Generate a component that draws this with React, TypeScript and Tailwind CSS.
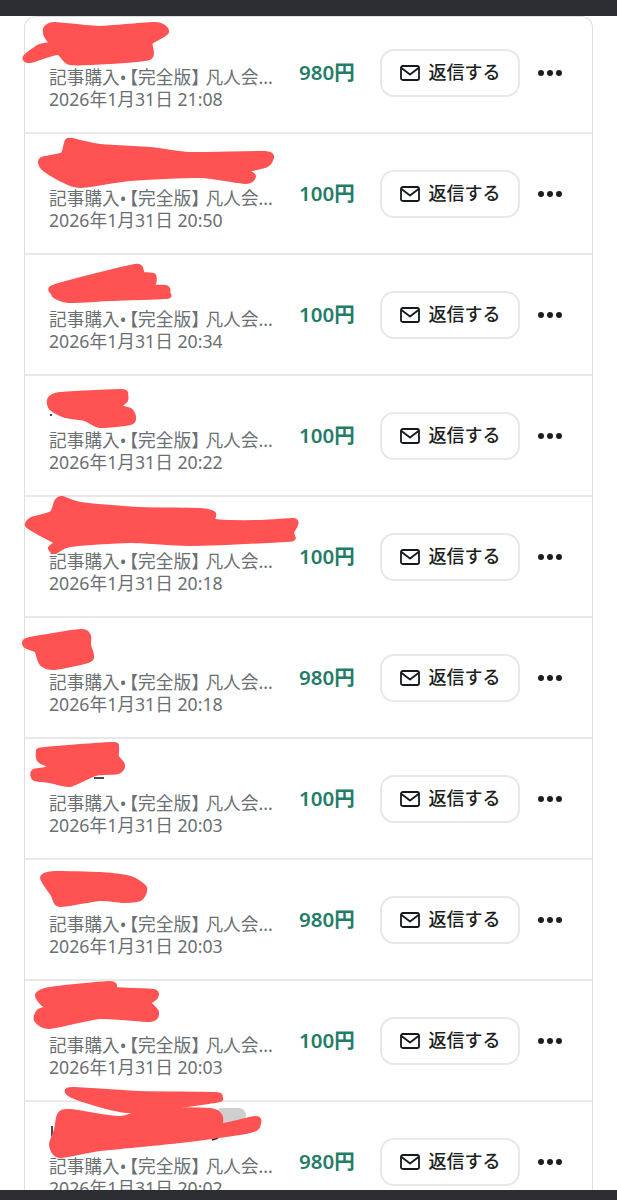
const rows = [
  { price: "980円", time: "21:08" },
  { price: "100円", time: "20:50" },
  { price: "100円", time: "20:34" },
  { price: "100円", time: "20:22" },
  { price: "100円", time: "20:18" },
  { price: "980円", time: "20:18" },
  { price: "100円", time: "20:03" },
  { price: "980円", time: "20:03" },
  { price: "100円", time: "20:03" },
  { price: "980円", time: "20:02" },
];

const scribbles = [
  "46,29 55,25 100,29 155,25 166,32 150,42 149,57 110,61 70,62 58,52 30,60 26,57 40,47 52,44 47,36",
  "42,160 63,155 68,141 80,143 100,147 150,150 190,155 265,154 270,160 265,165 245,170 253,176 245,181 200,175 130,178 80,185 60,178 44,168",
  "53,288 85,279 135,267 141,271 142,275 153,276 153,283 145,287 166,288 167,294 165,296 110,298 70,300 56,296 53,292",
  "50,400 60,395 120,392 125,395 125,400 118,407 130,411 133,417 130,422 100,425 85,418 65,415 52,408",
  "28,525 32,520 52,514 57,502 62,499 80,505 140,510 200,511 213,514 215,522 262,523 293,521 295,525 291,532 292,537 285,539 190,543 130,540 70,544 55,551 51,548 57,542 37,531",
  "25,643 30,640 80,632 88,636 88,645 91,655 88,660 55,667 42,663 37,650 27,646",
  "39,752 45,750 110,745 116,747 116,757 122,765 118,771 95,773 70,784 50,780 35,778 34,772 45,770 52,766 40,760",
  "43,878 55,874 100,875 130,879 144,888 140,898 125,900 100,898 60,904 54,895",
  "38,995 50,990 110,984 116,990 153,992 155,997 148,1003 156,1012 150,1019 100,1016 50,1026 37,1020 39,1012 49,1008 42,1002",
  "68,1092 75,1090 140,1094 215,1095 217,1098 215,1100 130,1110 80,1098",
  "60,1115 70,1112 120,1119 150,1111 210,1111 220,1117 222,1126 255,1119 258,1123 250,1130 180,1140 100,1148 60,1155 52,1145 57,1130",
];

function smooth(points: string) {
  const p = points.split(" ").map((s) => s.split(",").map(Number));
  const n = p.length;
  let d = `M${p[0][0]} ${p[0][1]}`;
  for (let i = 0; i < n; i++) {
    const a = p[(i - 1 + n) % n];
    const b = p[i];
    const c = p[(i + 1) % n];
    const e = p[(i + 2) % n];
    const t = 0.12;
    d += `C${b[0] + (c[0] - a[0]) * t} ${b[1] + (c[1] - a[1]) * t} ${c[0] - (e[0] - b[0]) * t} ${c[1] - (e[1] - b[1]) * t} ${c[0]} ${c[1]}`;
  }
  return d + "Z";
}

export default function App() {
  return (
    <div className="relative flex h-[1200px] flex-col overflow-hidden bg-white font-['Noto_Sans','Noto_Sans_CJK_JP',sans-serif]">
      <div className="h-4 shrink-0 bg-[#2d2e33]" />
      <div className="min-h-0 flex-1 overflow-hidden px-6">
        <div className="overflow-hidden rounded-t-xl border-x border-t border-[#dfdfdf]">
          {rows.map((r, i) => (
            <div
              key={i}
              className={`flex h-[121px] items-center border-b-2 border-[#e8e8e8] pl-[24px] ${i === 0 ? "-mt-[4px]" : ""}`}
            >
              <div className="w-[228px] shrink-0 pt-[30px] text-[17.7px] leading-[22px] whitespace-nowrap text-[#6a6f72]">
                <div>
                  記事購入<span className="tracking-[-6px]">•</span>【完全版<span className="tracking-[-3.5px]">】</span>凡人会...
                </div>
                <div>2026年1月31日 {r.time}</div>
              </div>
              <div className="w-[103px] shrink-0 pl-[22px] text-[20.5px] font-semibold whitespace-nowrap text-[#1f7d68]">{r.price}</div>
              <button className="flex h-[48px] w-[140px] shrink-0 items-center justify-center gap-[9px] rounded-[14px] border-2 border-[#e8e8e8] bg-white text-[18px] font-medium text-[#1c1f21]">
                <svg width="20" height="16" viewBox="0 0 20 16" fill="none" stroke="#16191b" strokeWidth="1.8" strokeLinejoin="round" strokeLinecap="round">
                  <rect x="1" y="1" width="18" height="14" rx="1.8" />
                  <path d="M1.5 3 10 9.5 18.5 3" />
                </svg>
                返信する
              </button>
              <div className="ml-[18px] flex items-center gap-[3px]">
                <span className="h-[6px] w-[6px] rounded-full bg-[#1c1f21]" />
                <span className="h-[6px] w-[6px] rounded-full bg-[#1c1f21]" />
                <span className="h-[6px] w-[6px] rounded-full bg-[#1c1f21]" />
              </div>
            </div>
          ))}
        </div>
      </div>
      <div className="h-[10px] shrink-0 bg-[#2d2e33]" />
      <svg className="pointer-events-none absolute top-0 left-0" width="617" height="1190" viewBox="0 0 617 1190">
        <rect x="215" y="1108" width="31" height="15" rx="7.5" fill="#cfcfcf" />
        <path d="M52 1126v10M212 1140l6-2" stroke="#111" strokeWidth="1.5" fill="none" />
        <path d="M50 44h3M50 287h2M50 415h2M50 533h2M94 778h10" stroke="#111" strokeWidth="1.5" fill="none" />
        {scribbles.map((p, i) => (
          <path key={i} d={smooth(p)} fill="#ff5252" stroke="#ff5252" strokeWidth="6" strokeLinejoin="round" />
        ))}
      </svg>
    </div>
  );
}
